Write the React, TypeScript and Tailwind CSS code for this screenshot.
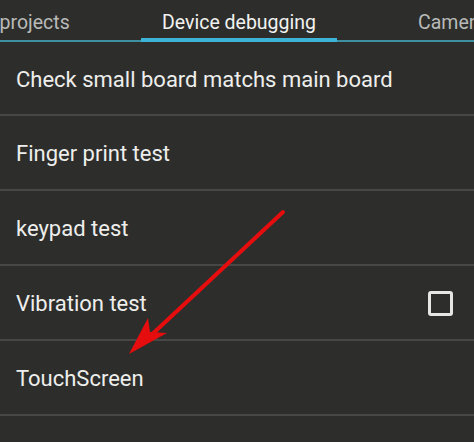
const rows = [
  { label: 'Check small board matchs main board', check: false },
  { label: 'Finger print test', check: false },
  { label: 'keypad test', check: false },
  { label: 'Vibration test', check: true },
  { label: 'TouchScreen', check: false },
];

export default function App() {
  return (
    <div
      className="relative w-[474px] h-[442px] overflow-hidden bg-[#2d2e2c] text-[#eeeeec]"
      style={{ fontFamily: 'Roboto, "Noto Sans", sans-serif' }}
    >
      {/* Tabs */}
      <div className="h-[42px] border-b-2 border-[#3f8fa3] flex items-stretch whitespace-nowrap text-[19.5px]">
        <div className="shrink-0 ml-[-53px] w-[194px] pt-[8px] text-[#b9bab8]">Basic projects</div>
        <div className="shrink-0 w-[196px] flex flex-col items-center justify-between text-[#f2f2f0]">
          <span className="pt-[8px]">Device debugging</span>
          <div className="w-full h-[4px] mb-[-2px] bg-[#3cb4d8]" />
        </div>
        <div className="shrink-0 ml-[81px] pt-[8px] text-[#b9bab8]">Camera</div>
      </div>

      {/* List */}
      <div className="flex flex-col">
        {rows.map((r, i) => (
          <div
            key={i}
            className={`flex items-center justify-between pl-[16px] pr-[21px] pt-[2px] border-b-2 border-[#474846] ${i === 0 ? 'h-[74px]' : 'h-[75px]'}`}
          >
            <span className="text-[22px]">{r.label}</span>
            {r.check && <div className="w-[25px] h-[25px] border-[3px] border-[#e6e6e4] rounded-[3px]" />}
          </div>
        ))}
      </div>

      {/* Red annotation arrow */}
      <svg className="absolute left-0 top-0" width="474" height="442" viewBox="0 0 474 442">
        <line x1="283" y1="212" x2="146" y2="340" stroke="#e50d0d" strokeWidth="4" strokeLinecap="round" />
        <path d="M129 354 L148 318 L150 332 L167 333 Z" fill="#e50d0d" />
      </svg>
    </div>
  );
}
